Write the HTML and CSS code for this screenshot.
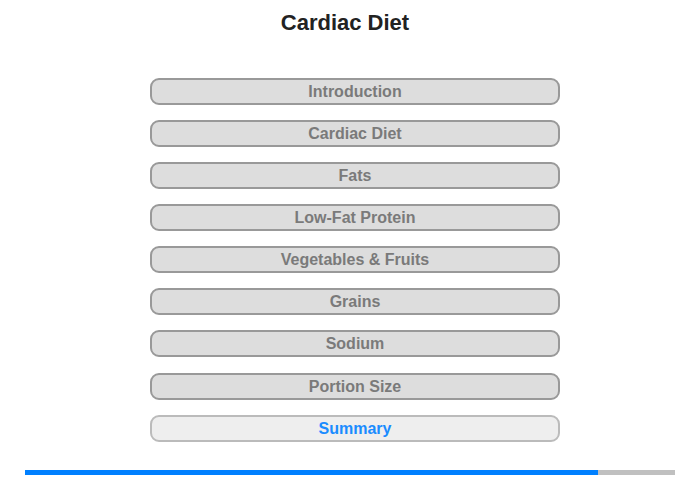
FILE: index.html
```html
<!DOCTYPE html>
<html>
<head>
<meta charset="utf-8">
<link rel="stylesheet" href="styles.css">
</head>
<body>
<div class="page">
  <h1 class="title">Cardiac Diet</h1>
  <nav class="menu">
    <div class="item">Introduction</div>
    <div class="item">Cardiac Diet</div>
    <div class="item">Fats</div>
    <div class="item">Low-Fat Protein</div>
    <div class="item">Vegetables &amp; Fruits</div>
    <div class="item">Grains</div>
    <div class="item">Sodium</div>
    <div class="item">Portion Size</div>
    <div class="item active">Summary</div>
  </nav>
  <div class="progress"><div class="fill" style="width:88.2%"></div></div>
</div>
</body>
</html>
```
FILE: styles.css
```css
html, body {
  margin: 0;
  padding: 0;
  background: #fff;
}
.page {
  width: 700px;
  height: 480px;
  font-family: "Liberation Sans", Arial, sans-serif;
  display: flex;
  flex-direction: column;
}
.title {
  margin: 0;
  padding: 10px 10px 0 0;
  font-size: 22px;
  line-height: 26px;
  font-weight: bold;
  color: #222;
  text-align: center;
}
.menu {
  margin: 41.6px 0 0 150px;
  display: flex;
  flex-direction: column;
  gap: 15.15px;
  width: 410px;
}
.item {
  box-sizing: border-box;
  height: 27px;
  border: 2px solid #999;
  border-radius: 9px;
  background: #ddd;
  color: #7a7a7a;
  font-size: 16px;
  font-weight: bold;
  line-height: 23px;
  text-align: center;
}
.item.active {
  background: #eee;
  border-color: #bbb;
  color: #1a8cff;
}
.progress {
  margin: 28.5px 0 0 25px;
  width: 650px;
  height: 5px;
  background: #c0c0c0;
}
.fill {
  height: 100%;
  background: #0080ff;
}
```
